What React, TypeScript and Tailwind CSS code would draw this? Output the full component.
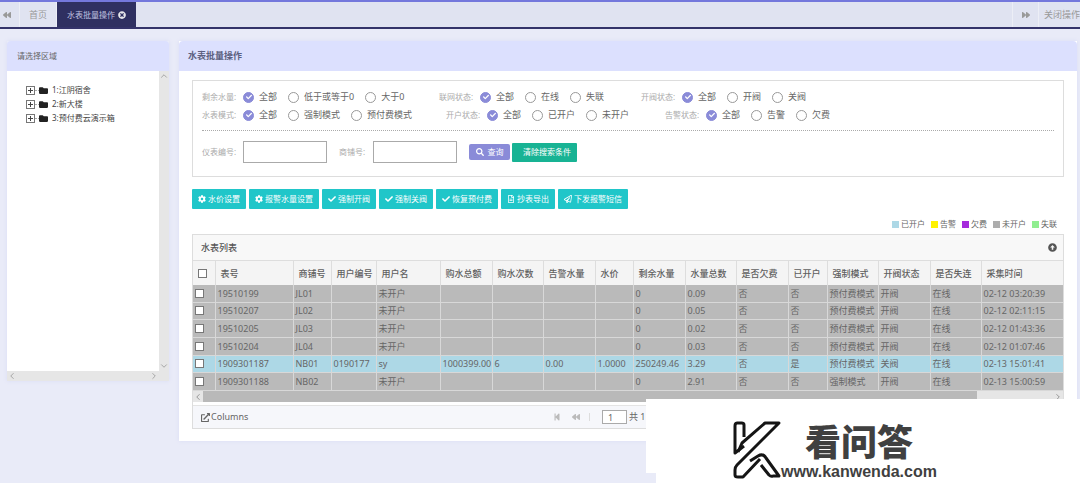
import { useState, type ReactNode } from "react";
import type { IconType } from "react-icons";
import {
  FaArrowAltCircleUp,
  FaBackward,
  FaCheck,
  FaCog,
  FaExternalLinkAlt,
  FaFolder,
  FaForward,
  FaRegFileAlt,
  FaRegPaperPlane,
  FaSearch,
  FaStepBackward,
  FaTimesCircle,
} from "react-icons/fa";
import { LuChevronDown, LuChevronLeft, LuChevronRight, LuChevronUp } from "react-icons/lu";

type Filter = { name: string; label: string; options: string[]; width: string };

const filterRows: Filter[][] = [
  [
    { name: "remain", label: "剩余水量:", options: ["全部", "低于或等于0", "大于0"], width: "w-[237px]" },
    { name: "network", label: "联网状态:", options: ["全部", "在线", "失联"], width: "w-[202px]" },
    { name: "valve", label: "开阀状态:", options: ["全部", "开阀", "关阀"], width: "w-[202px]" },
  ],
  [
    { name: "mode", label: "水表模式:", options: ["全部", "强制模式", "预付费模式"], width: "w-[244px]" },
    { name: "account", label: "开户状态:", options: ["全部", "已开户", "未开户"], width: "w-[219px]" },
    { name: "alarm", label: "告警状态:", options: ["全部", "告警", "欠费"], width: "w-[202px]" },
  ],
];

const actions: { label: string; icon: IconType }[] = [
  { label: "水价设置", icon: FaCog },
  { label: "报警水量设置", icon: FaCog },
  { label: "强制开阀", icon: FaCheck },
  { label: "强制关阀", icon: FaCheck },
  { label: "恢复预付费", icon: FaCheck },
  { label: "抄表导出", icon: FaRegFileAlt },
  { label: "下发报警短信", icon: FaRegPaperPlane },
];

const legend = [
  { label: "已开户", color: "bg-[#add8e6]" },
  { label: "告警", color: "bg-[#fff200]" },
  { label: "欠费", color: "bg-[#a52bdc]" },
  { label: "未开户", color: "bg-[#adadad]" },
  { label: "失联", color: "bg-[#90ee90]" },
];

const columns = [
  { title: "表号", width: "w-[78px]" },
  { title: "商铺号", width: "w-[38px]" },
  { title: "用户编号", width: "w-[45px]" },
  { title: "用户名", width: "w-[64px]" },
  { title: "购水总额", width: "w-[52px]" },
  { title: "购水次数", width: "w-[51px]" },
  { title: "告警水量", width: "w-[52px]" },
  { title: "水价", width: "w-[38px]" },
  { title: "剩余水量", width: "w-[52px]" },
  { title: "水量总数", width: "w-[51px]" },
  { title: "是否欠费", width: "w-[52px]" },
  { title: "已开户", width: "w-[39px]" },
  { title: "强制模式", width: "w-[51px]" },
  { title: "开阀状态", width: "w-[52px]" },
  { title: "是否失连", width: "w-[51px]" },
  { title: "采集时间", width: "w-[82px]" },
];

const rows = [
  ["19510199", "JL01", "", "未开户", "", "", "", "", "0", "0.09", "否", "否", "预付费模式", "开阀", "在线", "02-12 03:20:39"],
  ["19510207", "JL02", "", "未开户", "", "", "", "", "0", "0.05", "否", "否", "预付费模式", "开阀", "在线", "02-12 02:11:15"],
  ["19510205", "JL03", "", "未开户", "", "", "", "", "0", "0.02", "否", "否", "预付费模式", "开阀", "在线", "02-12 01:43:36"],
  ["19510204", "JL04", "", "未开户", "", "", "", "", "0", "0.03", "否", "否", "预付费模式", "开阀", "在线", "02-12 01:07:46"],
  ["1909301187", "NB01", "0190177", "sy", "1000399.00", "6", "0.00", "1.0000", "250249.46", "3.29", "否", "是", "预付费模式", "关阀", "在线", "02-13 15:01:41"],
  ["1909301188", "NB02", "", "未开户", "", "", "", "", "0", "2.91", "否", "否", "强制模式", "开阀", "在线", "02-13 15:00:59"],
];

const regions = ["1:江阴宿舍", "2:新大楼", "3:预付费云演示箱"];

function TopTabs() {
  return (
    <nav className="flex h-[29px] items-stretch border-t-2 border-b-2 border-t-[#7478dc] border-b-[#34336a] bg-[#e0e3f1] text-[#999]">
      <button aria-label="向左" className="flex w-5 items-center border-r border-[#eceef6] pl-[3px]">
        <FaBackward className="size-2" />
      </button>
      <a href="#home" className="flex w-[37px] items-center justify-center border-r border-[#eceef6] text-[9px]">首页</a>
      <a href="#batch" className="flex w-[79px] items-center justify-center gap-[3px] bg-[#2f3061] text-[8px] text-[#c0c3e0]">
        水表批量操作
        <FaTimesCircle className="size-2 text-[#e6e6ea]" />
      </a>
      <button aria-label="向右" className="ml-auto flex w-[27px] items-center justify-center border-x border-[#eceef6]">
        <FaForward className="size-2" />
      </button>
      <button className="w-[41px] pl-[5px] text-left text-[9px] whitespace-nowrap">关闭操作</button>
    </nav>
  );
}

function RegionPanel() {
  return (
    <aside className="w-[162px] shrink-0 shadow-[0_0_4px_#d9dcf5]">
      <h2 className="flex h-[30px] items-center rounded-t-sm bg-[#dce0fe] px-[10px] text-[8px] text-[#666]">请选择区域</h2>
      <div className="flex h-[300px] bg-white">
        <ul className="grow pt-3 pl-[19px] text-[8px] text-[#444]">
          {regions.map((region) => (
            <li key={region} className="flex h-[14px] items-center">
              <button aria-label="展开" className="grid size-[9px] place-items-center border border-[#777] bg-white">
                <svg viewBox="0 0 5 5" className="size-[5px]" stroke="#444">
                  <path d="M0 2.5H5M2.5 0V5" />
                </svg>
              </button>
              <span className="w-1 border-t border-dotted border-[#aaa]" />
              <FaFolder className="mr-1 size-[9px] text-[#222]" />
              {region}
            </li>
          ))}
        </ul>
        <div className="flex w-[10px] flex-col items-center justify-between bg-[#e6e6e6] text-[#999]">
          <LuChevronUp className="size-[10px]" />
          <LuChevronDown className="size-[10px]" />
        </div>
      </div>
      <div className="flex h-[10px] items-center justify-between bg-[#e6e6e6] pr-[10px] text-[#999]">
        <LuChevronLeft className="size-[10px]" />
        <LuChevronRight className="size-[10px]" />
      </div>
    </aside>
  );
}

function RadioGroup({ filter }: { filter: Filter }) {
  const [value, setValue] = useState(filter.options[0]);

  return (
    <div role="radiogroup" aria-label={filter.label} className={`flex h-[18px] items-center ${filter.width}`}>
      <span className="w-[41px] shrink-0 text-[8px] text-[#aaa]">{filter.label}</span>
      <div className="flex gap-[11px]">
        {filter.options.map((option) => (
          <label key={option} className="flex items-center gap-[5px] text-[9px] whitespace-nowrap text-[#666]">
            <span className="grid place-items-center">
              <input
                type="radio"
                name={filter.name}
                checked={value === option}
                onChange={() => setValue(option)}
                className="col-start-1 row-start-1 size-[11px] appearance-none rounded-full border border-[#999] checked:border-[#8a8bd8] checked:bg-[#8a8bd8]"
              />
              {value === option && <FaCheck className="pointer-events-none col-start-1 row-start-1 size-[6px] text-white" />}
            </span>
            {option}
          </label>
        ))}
      </div>
    </div>
  );
}

function SearchForm() {
  return (
    <form className="h-[97px] border border-[#ddd] px-[9px] pt-[7px]" onSubmit={(event) => event.preventDefault()}>
      {filterRows.map((filters) => (
        <div key={filters[0].name} className="flex">
          {filters.map((filter) => (
            <RadioGroup key={filter.name} filter={filter} />
          ))}
        </div>
      ))}
      <hr className="mt-[6px] border-t border-dotted border-[#aaa]" />
      <div className="mt-[10px] flex items-center text-[8px] text-[#aaa]">
        <label htmlFor="meter" className="w-[41px]">仪表编号:</label>
        <input id="meter" className="h-[22px] w-[84px] border border-[#aaa] px-1 text-[#666]" />
        <label htmlFor="shop" className="ml-3 w-[34px]">商铺号:</label>
        <input id="shop" className="h-[22px] w-[84px] border border-[#aaa] px-1 text-[#666]" />
        <button className="ml-3 flex h-4 w-[41px] items-center justify-center gap-1 rounded-[2px] bg-[#8a8bd8] text-white">
          <FaSearch className="size-2" />
          查询
        </button>
        <button type="reset" className="ml-[2px] h-[19px] rounded-[1px] bg-[#18b394] pr-[6px] pl-[11px] text-white">清除搜索条件</button>
      </div>
    </form>
  );
}

function CheckBox({ label }: { label: string }) {
  return <input type="checkbox" aria-label={label} className="block size-[9px] appearance-none border border-[#777] bg-white checked:bg-[#8a8bd8]" />;
}

function MeterTable() {
  return (
    <section className="mt-[2px] border border-[#ddd]">
      <div className="flex h-[26px] items-center justify-between border-b border-[#ddd] bg-[#f8f8f8] pr-[6px] pl-2 text-[#555]">
        <h3 className="text-[9px] font-medium">水表列表</h3>
        <button aria-label="收起">
          <FaArrowAltCircleUp className="size-[9px]" />
        </button>
      </div>
      <table className="h-[130px] w-full table-fixed border-collapse text-left text-[9px] leading-[13px] whitespace-nowrap text-[#666]">
        <thead>
          <tr className="h-6 bg-[#f4f4f4] text-[#606060]">
            <th className="w-[22px] border-r border-[#ddd] pl-[5px]">
              <CheckBox label="全选" />
            </th>
            {columns.map((column) => (
              <th key={column.title} className={`border-r border-[#ddd] pl-[5px] font-medium last:border-r-0 ${column.width}`}>
                {column.title}
              </th>
            ))}
          </tr>
        </thead>
        <tbody>
          {rows.map((row) => (
            <tr key={row[0]} className={row[2] ? "bg-[#add8e6]" : "bg-[#bababa]"}>
              <td className="border-r border-b border-[#d8d8d8] pl-[2px]">
                <CheckBox label={row[0]} />
              </td>
              {row.map((cell, index) => (
                <td key={index} className="border-r border-b border-[#d8d8d8] pl-[2px] last:border-r-0">
                  {cell}
                </td>
              ))}
            </tr>
          ))}
        </tbody>
      </table>
      <div className="flex h-[11px] items-center bg-[#e6e6e6] text-[#888]">
        <LuChevronLeft className="size-[10px]" />
        <div className="h-full w-[89%] bg-[#b9b9b9]" />
        <LuChevronRight className="ml-auto size-[10px]" />
      </div>
      <div className="mt-[3px] flex h-[23px] items-center border-t border-[#e4e4e4] bg-[#f6f7fb] text-[9px] text-[#666]">
        <button className="flex w-[360px] items-center gap-[1px] pl-2">
          <FaExternalLinkAlt className="size-[9px]" />
          Columns
        </button>
        <div className="flex items-center text-[#bbb]">
          <button aria-label="首页" className="w-[19px]">
            <FaStepBackward className="size-2" />
          </button>
          <button aria-label="上一页" className="w-[18px] border-r border-[#ddd]">
            <FaBackward className="size-2" />
          </button>
          <input aria-label="页码" defaultValue="1" className="mr-[2px] ml-3 h-[14px] w-[25px] border border-[#aaa] bg-white pl-[5px] text-[#666]" />
          <span className="text-[#666]">共 1 页</span>
        </div>
      </div>
    </section>
  );
}

function Panel({ title, children }: { title: string; children: ReactNode }) {
  return (
    <main className="min-w-0 grow bg-white shadow-[0_0_4px_#d9dcf5]">
      <h1 className="flex h-[30px] items-center rounded-t-sm bg-[#dce0fe] px-[9px] text-[9px] font-bold text-[#5b5f80]">{title}</h1>
      <div className="px-[13px] pt-[9px] pb-3">{children}</div>
    </main>
  );
}

function SiteMark() {
  return (
    <div className="absolute top-[399px] right-0 h-[84px] w-[434px]">
      <div className="h-[74px] bg-white" />
      <div className="ml-[10px] h-[10px] bg-white" />
      <svg
        viewBox="0 0 54 64"
        className="absolute top-[19px] left-[84px] h-16 w-[54px]"
        fill="none"
        stroke="#151515"
        strokeWidth="3"
        strokeLinejoin="round"
      >
        <path d="M14 19V7Q14 5 12 5H7Q5 5 5 8V35L14 28" />
        <path d="M8 34L12 25L35 5H49L7 47Q5 49 5 52V57Q5 59 8 59H13L30 41" />
        <path d="M20 43L28 38Q33 35 36 40L49 58H43Q41 59 39 57L31 47" />
      </svg>
      <p className="absolute top-[26px] left-[159px] text-[36px] leading-9 font-black text-[#404040]">看问答</p>
      <p className="absolute top-[64px] left-[135px] font-['Liberation_Sans',sans-serif] text-[16px] leading-[18px] font-bold text-[#404040]">
        www.kanwenda.com
      </p>
    </div>
  );
}

export default function App() {
  return (
    <div className="relative min-h-screen overflow-hidden bg-[#e9ebf8] font-['Noto_Sans','Noto_Sans_CJK_SC',sans-serif]">
      <TopTabs />
      <div className="flex items-start gap-[10px] pt-3 pr-[3px] pl-[7px]">
        <RegionPanel />
        <Panel title="水表批量操作">
          <SearchForm />
          <div className="mt-3 flex gap-[3px] text-[8px] text-white">
            {actions.map(({ label, icon: Icon }) => (
              <button key={label} className="flex h-5 items-center gap-[2px] rounded-[1px] bg-[#20c6c9] px-[6px] whitespace-nowrap">
                <Icon className="size-2" />
                {label}
              </button>
            ))}
          </div>
          <ul className="mt-[7px] flex h-4 items-center justify-end gap-[6px] pr-[7px] text-[8px] text-[#666]">
            {legend.map((item) => (
              <li key={item.label} className="flex items-center gap-[2px]">
                <span className={`size-[7px] ${item.color}`} />
                {item.label}
              </li>
            ))}
          </ul>
          <MeterTable />
        </Panel>
      </div>
      <SiteMark />
    </div>
  );
}
